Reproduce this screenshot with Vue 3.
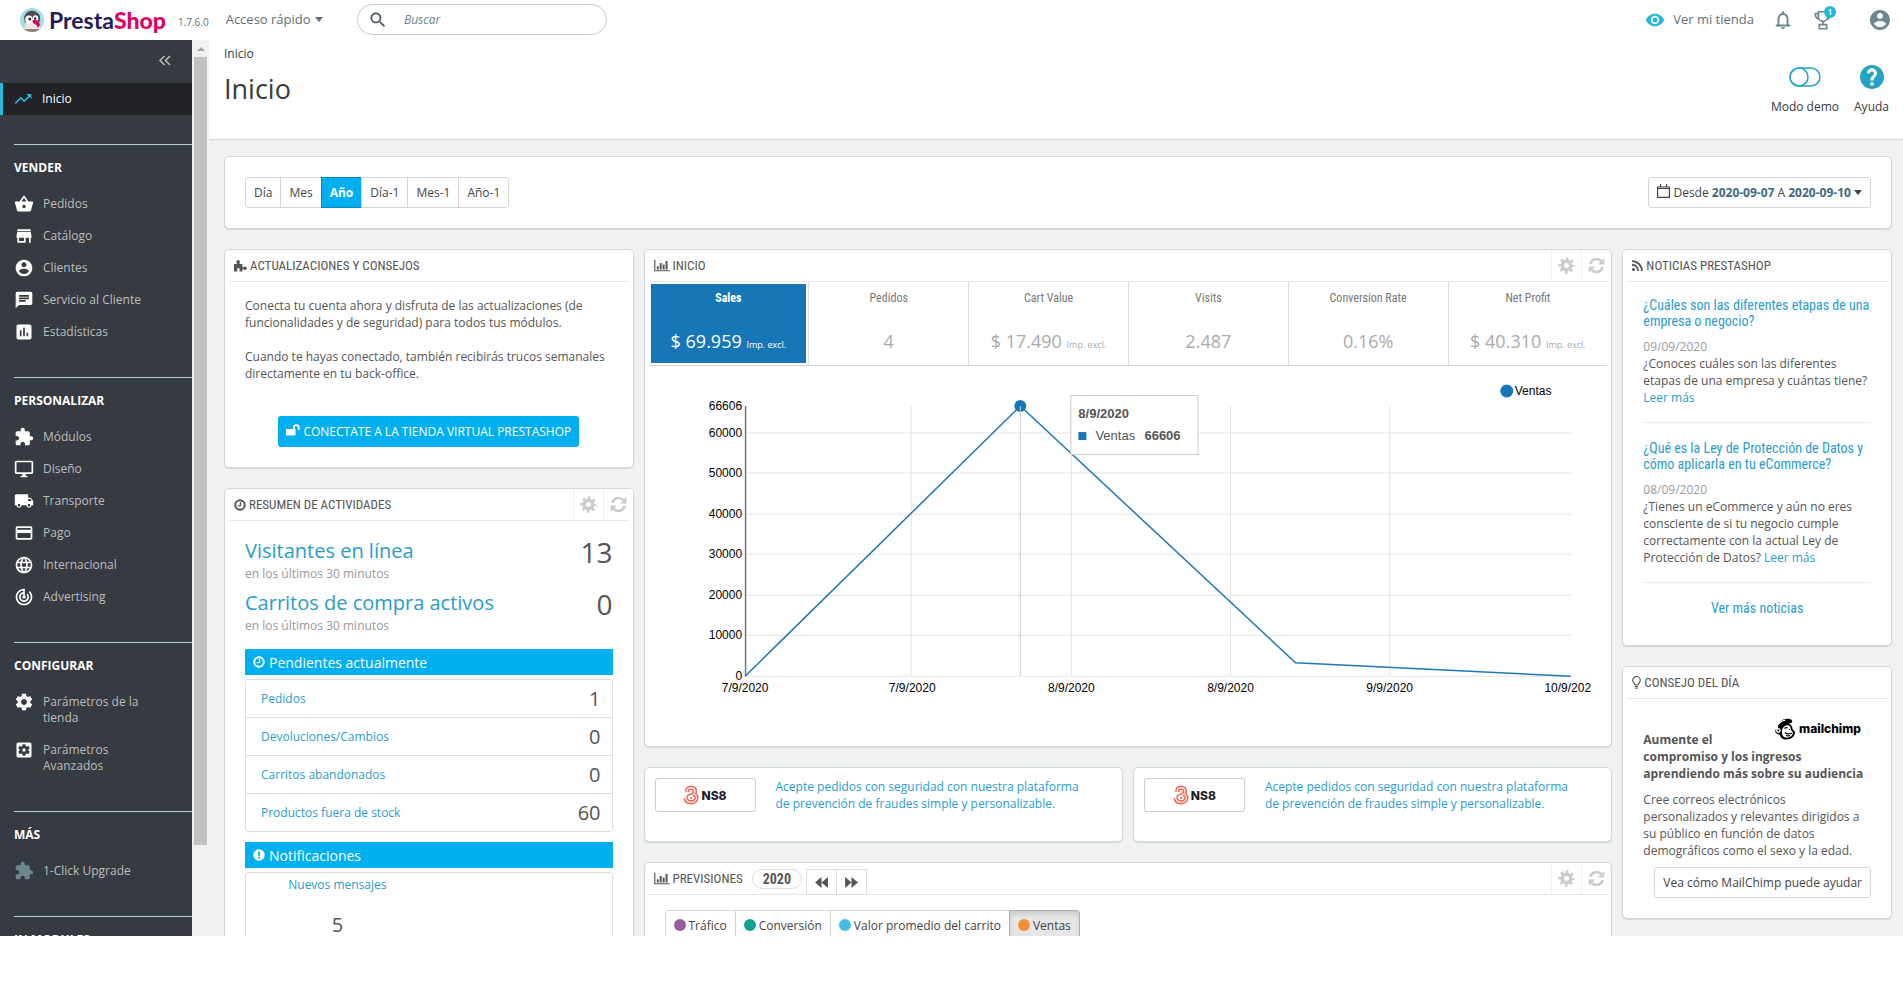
<template>
  <div class="app">
    <svg class="sprite" aria-hidden="true">
      <symbol id="cog" viewBox="0 0 24 24">
        <circle cx="12" cy="12" r="6" fill="none" stroke="currentColor" stroke-width="5" />
        <circle cx="12" cy="12" r="9" fill="none" stroke="currentColor" stroke-width="5" pathLength="16" stroke-dasharray="1 1" stroke-dashoffset="0.5" />
      </symbol>
      <symbol id="refresh" viewBox="0 0 24 24">
        <path d="M3.4 10a9 9 0 0 1 15.4-4.2M20.600 14a9 9 0 0 1-15.400 4.200" fill="none" stroke="currentColor" stroke-width="3.8" />
        <path d="M23 1.500v9h-9zM1 22.500v-9h9z" fill="currentColor" />
      </symbol>
      <symbol id="bars" viewBox="0 0 24 20">
        <path d="M0 1h1.800v16.200H24V19H0zM4 11h3v5H4zM8.500 6h3v10h-3zM13 8.500h3V16h-3zM17.500 3h3v13h-3z" fill="currentColor" />
      </symbol>
      <symbol id="clock" viewBox="0 0 24 24">
        <circle cx="12" cy="12" r="9.5" fill="none" stroke="currentColor" stroke-width="4" />
        <path d="M13 6v7.200H7.500" fill="none" stroke="currentColor" stroke-width="2.600" />
      </symbol>
      <symbol id="ns8" viewBox="0 0 18 22">
        <path d="M3.200 7.500C2.500 3.500 5.500 1.300 9 1.300c3.800 0 6.500 2.500 6 6.200-.2 1.300-1 2-1 2 2 1.200 2.800 3 2.600 5-.4 3.700-3.600 6.200-7.600 6.200-4.200 0-7.200-2.600-7.600-6.200" fill="none" stroke="#ee6b5b" stroke-width="1.800" />
        <path d="M6 7.500C6 5.500 7.200 4.500 9 4.500s3 1.200 3 2.900c0 2.800-5.500 2.600-7.300 5-1.200 2.600 1 5.200 4.300 5.200 3 0 4.900-1.800 4.700-4-.2-1.600-1.700-2.400-3-2" fill="none" stroke="#ee6b5b" stroke-width="1.800" />
        <circle cx="9.300" cy="14.200" r="1.300" fill="#ee6b5b" />
      </symbol>
    </svg>

    <header class="topbar">
      <a href="#" class="logo">
        <svg class="logo-head" viewBox="0 0 24 24">
          <clipPath id="face"><ellipse cx="12" cy="12" rx="12" ry="12" /></clipPath>
          <g clip-path="url(#face)">
            <rect width="24" height="24" fill="#a4dbe8" />
            <path d="M5 24c-1-5 0-8 2-10h8l5 3v7z" fill="#efe9dc" />
            <path d="M4 10C5 4 10 2 14 3s7 4 6 9l-2 5-3-6-6 1-4 3z" fill="#4d4b4d" />
            <ellipse cx="9" cy="11.500" rx="3.800" ry="4" fill="#fff" />
            <ellipse cx="15.500" cy="10.500" rx="2.800" ry="3.200" fill="#fff" />
            <circle cx="9.800" cy="11" r="1.500" fill="#2b2b33" />
            <circle cx="15.200" cy="10.500" r="1.200" fill="#2b2b33" />
            <path d="M12.500 12c4-1 7 1 7.500 5l-2 3c-1-3-3-4-5-5z" fill="#df0067" />
            <path d="M3 21h18v3H3z" fill="#8d8573" />
          </g>
        </svg>
        <span class="logo-text">Presta<b>Shop</b></span>
      </a>
      <span class="version">1.7.6.0</span>
      <button class="quick" type="button">Acceso rápido <i class="caret"></i></button>
      <label class="search">
        <svg viewBox="0 0 24 24"><path :d="icons.search" /></svg>
        <input type="text" placeholder="Buscar" aria-label="Buscar" />
      </label>
      <div class="topbar-right">
        <a href="#" class="shop-link">
          <svg viewBox="0 0 24 24"><path :d="icons.eye" /></svg>
          Ver mi tienda
        </a>
        <button class="icon-btn" type="button" aria-label="Notificaciones">
          <svg viewBox="0 0 24 24"><path :d="icons.bell" /></svg>
        </button>
        <button class="icon-btn trophy" type="button" aria-label="Logros">
          <svg viewBox="0 0 24 24">
            <path d="M7 3h10v5.500a5 5 0 0 1-10 0zM7 5H3.500c0 3 1 5.500 4 6M17 5h3.500c0 3-1 5.500-4 6M12 13.500V17M8 17h8v4.500H8z" fill="none" stroke="currentColor" stroke-width="1.800" />
          </svg>
          <span class="badge">1</span>
        </button>
        <button class="icon-btn avatar" type="button" aria-label="Cuenta">
          <svg viewBox="0 0 24 24"><path :d="icons.user" /></svg>
        </button>
      </div>
    </header>

    <div class="layout">
      <nav class="sidebar">
        <button class="collapse" type="button" aria-label="Contraer menú">
          <svg viewBox="0 0 14 12"><path d="M6.500 1l-5 5 5 5M12.500 1l-5 5 5 5" fill="none" stroke="currentColor" stroke-width="1.600" /></svg>
        </button>
        <a href="#" class="nav-item active">
          <svg viewBox="0 0 24 24"><path :d="icons.trending" /></svg>
          <span>Inicio</span>
        </a>
        <section v-for="group in menu" :key="group.title" class="nav-group">
          <h2>{{ group.title }}</h2>
          <a v-for="item in group.items" :key="item.label" href="#" class="nav-item" :class="{ muted: item.muted }">
            <svg viewBox="0 0 24 24"><path :d="icons[item.icon]" /></svg>
            <span>{{ item.label }}</span>
          </a>
        </section>
      </nav>
      <div class="scrollbar">
        <div class="scroll-arrow"></div>
        <div class="scroll-thumb"></div>
      </div>

      <main class="main">
        <div class="page-head">
          <div>
            <a href="#" class="breadcrumb">Inicio</a>
            <h1>Inicio</h1>
          </div>
          <div class="page-actions">
            <button type="button">
              <svg class="toggle" viewBox="0 0 32 20">
                <rect x="1" y="1" width="30" height="18" rx="9" fill="none" stroke="currentColor" stroke-width="1.500" />
                <circle cx="10" cy="10" r="9" fill="none" stroke="currentColor" stroke-width="1.500" />
              </svg>
              Modo demo
            </button>
            <button type="button">
              <svg class="help" viewBox="2 2 20 20"><path :d="icons.help" /></svg>
              Ayuda
            </button>
          </div>
        </div>

        <div class="content">
          <div class="panel toolbar">
            <div class="btn-group">
              <button v-for="p in periods" :key="p" type="button" :class="{ active: p === period }" @click="period = p">{{ p }}</button>
            </div>
            <button type="button" class="btn date-btn">
              <svg viewBox="0 0 13 14"><path d="M.6 3h11.800v10.400H.6zM.6 4.500h11.800M3.500 0v3.500M9.500 0v3.500" fill="none" stroke="currentColor" stroke-width="1.200" /></svg>
              Desde <b>2020-09-07</b> A <b>2020-09-10</b> <i class="caret"></i>
            </button>
          </div>

          <div class="columns">
            <div class="col col-left">
              <section class="panel">
                <h3 class="panel-heading">
                  <svg viewBox="0 0 14 13"><path d="M0 5h3V3.500a1.800 1.800 0 1 1 3 0V5h3v3.500h1.500a1.800 1.800 0 1 1 0 2H9V13H6v-2.500a1 1 0 0 0-2.500 0V13H0z" fill="currentColor" /></svg>
                  Actualizaciones y consejos
                </h3>
                <div class="panel-body updates">
                  <p>Conecta tu cuenta ahora y disfruta de las actualizaciones (de funcionalidades y de seguridad) para todos tus módulos.</p>
                  <p>Cuando te hayas conectado, también recibirás trucos semanales directamente en tu back-office.</p>
                  <button type="button" class="connect">
                    <svg viewBox="0 0 14 12"><path d="M0 5h7V3.500a3.300 3.300 0 0 1 6.600 0V6h-1.900V3.500a1.400 1.400 0 0 0-2.800 0V5h.6v6.500H0z" fill="currentColor" /></svg>
                    CONECTATE A LA TIENDA VIRTUAL PRESTASHOP
                  </button>
                </div>
              </section>

              <section class="panel">
                <h3 class="panel-heading">
                  <svg class="round"><use href="#clock" /></svg>
                  Resumen de actividades
                  <span class="tools">
                    <button type="button" aria-label="Configurar"><svg><use href="#cog" /></svg></button>
                    <button type="button" aria-label="Actualizar"><svg><use href="#refresh" /></svg></button>
                  </span>
                </h3>
                <div class="panel-body activity">
                  <div v-for="live in liveStats" :key="live.label" class="live">
                    <div>
                      <a href="#">{{ live.label }}</a>
                      <small>en los últimos 30 minutos</small>
                    </div>
                    <strong>{{ live.value }}</strong>
                  </div>
                  <h4 class="bar"><svg><use href="#clock" /></svg>Pendientes actualmente</h4>
                  <ul class="pending">
                    <li v-for="row in pending" :key="row.label">
                      <a href="#">{{ row.label }}</a>
                      <span>{{ row.value }}</span>
                    </li>
                  </ul>
                  <h4 class="bar">
                    <svg viewBox="0 0 24 24"><path fill-rule="evenodd" d="M12 .5a11.500 11.500 0 1 0 0 23 11.500 11.500 0 0 0 0-23zM10 5h4l-.5 9h-3zm.2 10.500h3.600V19h-3.600z" fill="currentColor" /></svg>Notificaciones
                  </h4>
                  <div class="notices">
                    <div>
                      <a href="#">Nuevos mensajes</a>
                      <span>5</span>
                    </div>
                  </div>
                </div>
              </section>
            </div>

            <div class="col col-center">
              <section class="panel">
                <h3 class="panel-heading">
                  <svg class="wide"><use href="#bars" /></svg>
                  Inicio
                  <span class="tools">
                    <button type="button" aria-label="Configurar"><svg><use href="#cog" /></svg></button>
                    <button type="button" aria-label="Actualizar"><svg><use href="#refresh" /></svg></button>
                  </span>
                </h3>
                <div class="kpis">
                  <button v-for="kpi in kpis" :key="kpi.label" type="button" class="kpi" :class="{ active: kpi.label === selected }" @click="selected = kpi.label">
                    <span class="kpi-inner">
                      <span class="kpi-label">{{ kpi.label }}</span>
                      <span class="kpi-value">{{ kpi.value }} <small v-if="kpi.tax">Imp. excl.</small></span>
                    </span>
                  </button>
                </div>
                <svg class="chart" viewBox="0 0 958 380">
                  <g class="grid">
                    <path v-for="t in yTicks" :key="t.label" :d="`M96 ${t.y}H921`" />
                    <path v-for="x in [262, 422, 581, 740]" :key="x" :d="`M${x} 40V310`" />
                  </g>
                  <path class="axis" d="M96.500 40V310" />
                  <text v-for="t in yTicks" :key="t.label" x="93" :y="t.y + 4" text-anchor="end">{{ t.label }}</text>
                  <text x="93" y="44" text-anchor="end">66606</text>
                  <text v-for="t in xTicks" :key="t.x" :x="t.x" y="326" text-anchor="middle">{{ t.label }}</text>
                  <path class="line" d="M96 310L371 40L646 296.500L921 310" />
                  <circle cx="371" cy="40" r="6" class="dot" />
                  <path class="guide" d="M371 40V310" />
                  <circle cx="857" cy="25" r="6.500" class="dot" />
                  <text x="865" y="29">Ventas</text>
                  <rect x="421.500" y="29.500" width="127" height="59" class="tip" />
                  <text x="429" y="52" class="tip-title">8/9/2020</text>
                  <rect x="429" y="66" width="8" height="8" class="dot" />
                  <text x="446" y="74" class="tip-text">Ventas</text>
                  <text x="495" y="74" class="tip-title">66606</text>
                </svg>
              </section>

              <div class="promos">
                <section v-for="n in 2" :key="n" class="panel promo">
                  <span class="ns8"><svg><use href="#ns8" /></svg>NS8</span>
                  <a href="#">Acepte pedidos con seguridad con nuestra plataforma de prevención de fraudes simple y personalizable.</a>
                </section>
              </div>

              <section class="panel">
                <h3 class="panel-heading">
                  <svg class="wide"><use href="#bars" /></svg>
                  Previsiones
                  <span class="year">2020</span>
                  <span class="pager">
                    <button type="button" aria-label="Anterior"><svg viewBox="0 0 14 12"><path d="M7 0v12L0 6zM14 0v12L7 6z" fill="currentColor" /></svg></button>
                    <button type="button" aria-label="Siguiente"><svg viewBox="0 0 14 12"><path d="M0 0v12l7-6zM7 0v12l7-6z" fill="currentColor" /></svg></button>
                  </span>
                  <span class="tools">
                    <button type="button" aria-label="Configurar"><svg><use href="#cog" /></svg></button>
                    <button type="button" aria-label="Actualizar"><svg><use href="#refresh" /></svg></button>
                  </span>
                </h3>
                <div class="panel-body">
                  <div class="btn-group series">
                    <button v-for="s in series" :key="s.label" type="button" :class="{ pressed: s.label === 'Ventas' }">
                      <i :style="{ background: s.color }"></i>{{ s.label }}
                    </button>
                  </div>
                </div>
              </section>
            </div>

            <div class="col col-right">
              <section class="panel">
                <h3 class="panel-heading">
                  <svg class="rss" viewBox="0 0 12 12"><circle cx="1.700" cy="10.300" r="1.700" fill="currentColor" /><path d="M0 5.200a6.800 6.800 0 0 1 6.800 6.800M0 1.200A10.800 10.800 0 0 1 10.800 12" fill="none" stroke="currentColor" stroke-width="2" /></svg>
                  Noticias PrestaShop
                </h3>
                <div class="panel-body news">
                  <article v-for="post in news" :key="post.date">
                    <h4><a href="#">{{ post.title }}</a></h4>
                    <time>{{ post.date }}</time>
                    <p>{{ post.text }} <a href="#">Leer más</a></p>
                  </article>
                  <a href="#" class="more">Ver más noticias</a>
                </div>
              </section>

              <section class="panel">
                <h3 class="panel-heading">
                  <svg class="bulb" viewBox="0 0 9 13"><path d="M3 9c0-1.500-2.300-2.300-2.300-4.700a3.800 3.800 0 0 1 7.600 0C8.300 6.700 6 7.500 6 9zM3 10.500h3M3.200 12.200h2.600" fill="none" stroke="currentColor" stroke-width="1.200" /></svg>
                  Consejo del día
                </h3>
                <div class="panel-body tip-day">
                  <span class="mailchimp">
                    <svg viewBox="0 0 22 22">
                      <path d="M4 10C3 5 8 1 13 .8c4-.2 6 1.700 5 3.700l-3 1c2 1 3.500 3 3.500 5.500l2.500 3c0 4-3.500 7.500-8.500 7.500-4 0-6-2-7-5-3 0-5-2-4-4.500z" fill="#000" />
                      <path d="M3 8.500C4 5 8 2.500 11.500 2.200M2.500 12.500c0-2 3-2.500 3.500-.5s-2.500 3.500-3.500.5" fill="none" stroke="#fff" stroke-width="1.300" />
                      <path d="M8 12c1-4 5-6 8-4l1 4 2 2.500c0 3-3 5-6.500 5S7.500 17 8 12z" fill="#fff" />
                      <path d="M10.500 10.500c1-1 2-1 3-.5M15 11.500h1M11 14.500c2 2 5 1.500 7 .5M12 17.500c2 .6 3 .4 4 0" fill="none" stroke="#000" stroke-width="1.200" />
                    </svg>mailchimp
                  </span>
                  <h4>Aumente el compromiso y los ingresos aprendiendo más sobre su audiencia</h4>
                  <p>Cree correos electrónicos personalizados y relevantes dirigidos a su público en función de datos demográficos como el sexo y la edad.</p>
                  <button type="button" class="btn">Vea cómo MailChimp puede ayudar</button>
                </div>
              </section>
            </div>
          </div>
        </div>
      </main>
    </div>
  </div>
</template>

<script setup>
import { ref } from 'vue';

const icons = {
  search: 'M15.5 14h-.79l-.28-.27C15.41 12.59 16 11.11 16 9.5 16 5.91 13.09 3 9.5 3S3 5.91 3 9.5 5.91 16 9.5 16c1.61 0 3.09-.59 4.23-1.57l.27.28v.79l5 4.99L20.49 19l-4.99-5zm-6 0C7.01 14 5 11.99 5 9.5S7.01 5 9.5 5 14 7.01 14 9.5 11.99 14 9.5 14z',
  eye: 'M12 4.5C7 4.5 2.73 7.61 1 12c1.73 4.39 6 7.5 11 7.5s9.27-3.11 11-7.5c-1.73-4.39-6-7.5-11-7.5zM12 17c-2.76 0-5-2.24-5-5s2.24-5 5-5 5 2.24 5 5-2.24 5-5 5zm0-8c-1.66 0-3 1.34-3 3s1.34 3 3 3 3-1.34 3-3-1.34-3-3-3z',
  bell: 'M12 22c1.1 0 2-.9 2-2h-4c0 1.1.9 2 2 2zm6-6v-5c0-3.07-1.63-5.64-4.5-6.32V4c0-.83-.67-1.5-1.5-1.5s-1.5.67-1.5 1.5v.68C7.64 5.36 6 7.92 6 11v5l-2 2v1h16v-1l-2-2zm-2 1H8v-6c0-2.48 1.51-4.5 4-4.5s4 2.02 4 4.5v6z',
  user: 'M12 2C6.48 2 2 6.48 2 12s4.48 10 10 10 10-4.48 10-10S17.52 2 12 2zm0 3c1.66 0 3 1.34 3 3s-1.34 3-3 3-3-1.34-3-3 1.34-3 3-3zm0 14.2c-2.5 0-4.71-1.28-6-3.22.03-1.99 4-3.08 6-3.08 1.99 0 5.97 1.09 6 3.08-1.29 1.94-3.5 3.22-6 3.22z',
  help: 'M12 2C6.48 2 2 6.48 2 12s4.48 10 10 10 10-4.48 10-10S17.52 2 12 2zm1.300 17h-2.600v-2.600h2.600V19zm1.970-7.750l-.9.92C13.65 12.9 13.300 13.5 13.300 15h-2.600v-.5c0-1.100.35-2.100 1.070-2.830l1.240-1.260c.37-.36.59-.86.59-1.410 0-.9-.7-1.600-1.600-1.600s-1.600.7-1.600 1.600H7.800c0-2.210 1.890-4.200 4.200-4.200s4.200 1.990 4.200 4.200c0 .88-.36 1.680-.93 2.250z',
  trending: 'M16 6l2.29 2.29-4.88 4.88-4-4L2 16.59 3.41 18l6-6 4 4 6.3-6.29L22 12V6z',
  basket: 'M17.21 9l-4.38-6.56c-.19-.28-.51-.42-.83-.42-.32 0-.64.14-.83.43L6.79 9H2c-.55 0-1 .45-1 1 0 .09.01.18.04.27l2.54 9.27c.23.84 1 1.46 1.92 1.46h13c.92 0 1.69-.62 1.93-1.46l2.54-9.27L23 10c0-.55-.45-1-1-1h-4.79zM9 9l3-4.4L15 9H9zm3 8c-1.1 0-2-.9-2-2s.9-2 2-2 2 .9 2 2-.9 2-2 2z',
  store: 'M20 4H4v2h16V4zm1 10v-2l-1-5H4l-1 5v2h1v6h10v-6h4v6h2v-6h1zm-9 4H6v-4h6v4z',
  chat: 'M20 2H4c-1.1 0-1.99.9-1.99 2L2 22l4-4h14c1.1 0 2-.9 2-2V4c0-1.1-.9-2-2-2zM6 9h12v2H6V9zm8 5H6v-2h8v2zm4-6H6V6h12v2z',
  stats: 'M19 3H5c-1.1 0-2 .9-2 2v14c0 1.1.9 2 2 2h14c1.1 0 2-.9 2-2V5c0-1.1-.9-2-2-2zM9 17H7v-7h2v7zm4 0h-2V7h2v10zm4 0h-2v-4h2v4z',
  puzzle: 'M20.5 11H19V7c0-1.1-.9-2-2-2h-4V3.5C13 2.12 11.88 1 10.5 1S8 2.12 8 3.5V5H4c-1.1 0-1.99.9-1.99 2v3.8H3.5c1.49 0 2.7 1.21 2.7 2.7s-1.21 2.7-2.7 2.7H2V20c0 1.1.9 2 2 2h3.8v-1.5c0-1.49 1.21-2.7 2.7-2.7 1.49 0 2.7 1.21 2.7 2.7V22H17c1.1 0 2-.9 2-2v-4h1.5c1.38 0 2.5-1.12 2.5-2.5S21.88 11 20.5 11z',
  desktop: 'M21 2H3c-1.1 0-2 .9-2 2v12c0 1.1.9 2 2 2h7v2H8v2h8v-2h-2v-2h7c1.1 0 2-.9 2-2V4c0-1.1-.9-2-2-2zm0 14H3V4h18v12z',
  truck: 'M20 8h-3V4H3c-1.1 0-2 .9-2 2v11h2c0 1.66 1.34 3 3 3s3-1.34 3-3h6c0 1.66 1.34 3 3 3s3-1.34 3-3h2v-5l-3-4zM6 18.5c-.83 0-1.5-.67-1.5-1.5s.67-1.5 1.5-1.5 1.5.67 1.5 1.5-.67 1.5-1.5 1.5zm13.5-9l1.96 2.5H17V9.5h2.5zm-1.5 9c-.83 0-1.5-.67-1.5-1.5s.67-1.5 1.5-1.5 1.5.67 1.5 1.5-.67 1.5-1.5 1.5z',
  card: 'M20 4H4c-1.11 0-1.99.89-1.99 2L2 18c0 1.11.89 2 2 2h16c1.11 0 2-.89 2-2V6c0-1.11-.89-2-2-2zm0 14H4v-6h16v6zm0-10H4V6h16v2z',
  globe: 'M11.99 2C6.47 2 2 6.48 2 12s4.47 10 9.99 10C17.52 22 22 17.52 22 12S17.52 2 11.99 2zm6.93 6h-2.95c-.32-1.25-.78-2.45-1.38-3.56 1.84.63 3.37 1.91 4.33 3.56zM12 4.04c.83 1.2 1.48 2.53 1.91 3.96h-3.82c.43-1.43 1.08-2.76 1.91-3.96zM4.26 14C4.1 13.36 4 12.69 4 12s.1-1.36.26-2h3.38c-.08.66-.14 1.32-.14 2 0 .68.06 1.34.14 2H4.26zm.82 2h2.95c.32 1.25.78 2.45 1.38 3.56-1.84-.63-3.37-1.9-4.33-3.56zm2.95-8H5.08c.96-1.66 2.49-2.93 4.33-3.56C8.81 5.55 8.35 6.75 8.03 8zM12 19.96c-.83-1.2-1.48-2.53-1.91-3.96h3.82c-.43 1.43-1.08 2.76-1.91 3.96zM14.34 14H9.66c-.09-.66-.16-1.32-.16-2 0-.68.07-1.35.16-2h4.68c.09.65.16 1.32.16 2 0 .68-.07 1.34-.16 2zm.25 5.56c.6-1.11 1.06-2.31 1.38-3.56h2.95c-.96 1.65-2.49 2.93-4.33 3.56zM16.36 14c.08-.66.14-1.32.14-2 0-.68-.06-1.34-.14-2h3.38c.16.64.26 1.31.26 2s-.1 1.36-.26 2h-3.38z',
  target: 'M19.07 4.93l-1.41 1.41C19.1 7.79 20 9.79 20 12c0 4.42-3.58 8-8 8s-8-3.58-8-8c0-4.08 3.05-7.44 7-7.93v2.02C8.16 6.57 6 9.03 6 12c0 3.31 2.69 6 6 6s6-2.69 6-6c0-1.66-.67-3.16-1.76-4.24l-1.41 1.41C15.55 9.9 16 10.9 16 12c0 2.21-1.79 4-4 4s-4-1.79-4-4c0-1.86 1.28-3.41 3-3.86v2.14c-.6.35-1 .98-1 1.72 0 1.1.9 2 2 2s2-.9 2-2c0-.74-.4-1.38-1-1.72V2h-1C6.48 2 2 6.48 2 12s4.48 10 10 10 10-4.48 10-10c0-2.76-1.12-5.26-2.93-7.07z',
  gear: 'M19.43 12.98c.04-.32.07-.64.07-.98s-.03-.66-.07-.98l2.11-1.65c.19-.15.24-.42.12-.64l-2-3.46c-.12-.22-.39-.3-.61-.22l-2.49 1c-.52-.4-1.08-.73-1.69-.98l-.38-2.65C14.46 2.18 14.25 2 14 2h-4c-.25 0-.46.18-.49.42l-.38 2.65c-.61.25-1.17.59-1.69.98l-2.49-1c-.23-.09-.49 0-.61.22l-2 3.46c-.13.22-.07.49.12.64l2.11 1.65c-.04.32-.07.65-.07.98s.03.66.07.98l-2.11 1.65c-.19.15-.24.42-.12.64l2 3.46c.12.22.39.3.61.22l2.49-1c.52.4 1.08.73 1.69.98l.38 2.65c.03.24.24.42.49.42h4c.25 0 .46-.18.49-.42l.38-2.65c.61-.25 1.17-.59 1.69-.98l2.49 1c.23.09.49 0 .61-.22l2-3.46c.12-.22.07-.49-.12-.64l-2.11-1.65zM12 15.5c-1.93 0-3.5-1.57-3.5-3.5s1.57-3.5 3.5-3.5 3.5 1.57 3.5 3.5-1.57 3.5-3.5 3.5z',
  gearBox: 'M12 10c-1.1 0-2 .9-2 2s.9 2 2 2 2-.9 2-2-.9-2-2-2zm7-7H5c-1.11 0-2 .9-2 2v14c0 1.1.89 2 2 2h14c1.11 0 2-.9 2-2V5c0-1.1-.89-2-2-2zm-1.75 9c0 .23-.02.46-.05.68l1.48 1.16c.13.11.17.3.08.45l-1.4 2.42c-.09.15-.27.21-.43.15l-1.74-.7c-.36.28-.76.51-1.18.69l-.26 1.85c-.03.17-.18.3-.35.3h-2.8c-.17 0-.32-.13-.35-.29l-.26-1.85c-.43-.18-.82-.41-1.18-.69l-1.74.7c-.16.06-.34 0-.43-.15l-1.4-2.42c-.09-.15-.05-.34.08-.45l1.48-1.16c-.03-.23-.05-.46-.05-.69 0-.23.02-.46.05-.68l-1.48-1.16c-.13-.11-.17-.3-.08-.45l1.4-2.42c.09-.15.27-.21.43-.15l1.74.7c.36-.28.76-.51 1.18-.69l.26-1.85c.03-.17.18-.3.35-.3h2.8c.17 0 .32.13.35.29l.26 1.85c.43.18.82.41 1.18.69l1.74-.7c.16-.06.34 0 .43.15l1.4 2.42c.09.15.05.34-.08.45l-1.48 1.16c.03.23.05.46.05.69z'
};

const menu = [
  {
    title: 'VENDER',
    items: [
      { label: 'Pedidos', icon: 'basket' },
      { label: 'Catálogo', icon: 'store' },
      { label: 'Clientes', icon: 'user' },
      { label: 'Servicio al Cliente', icon: 'chat' },
      { label: 'Estadísticas', icon: 'stats' }
    ]
  },
  {
    title: 'PERSONALIZAR',
    items: [
      { label: 'Módulos', icon: 'puzzle' },
      { label: 'Diseño', icon: 'desktop' },
      { label: 'Transporte', icon: 'truck' },
      { label: 'Pago', icon: 'card' },
      { label: 'Internacional', icon: 'globe' },
      { label: 'Advertising', icon: 'target' }
    ]
  },
  {
    title: 'CONFIGURAR',
    items: [
      { label: 'Parámetros de la tienda', icon: 'gear' },
      { label: 'Parámetros Avanzados', icon: 'gearBox' }
    ]
  },
  {
    title: 'MÁS',
    items: [{ label: '1-Click Upgrade', icon: 'puzzle', muted: true }]
  },
  { title: 'IN MODULES', items: [] }
];

const periods = ['Día', 'Mes', 'Año', 'Día-1', 'Mes-1', 'Año-1'];
const period = ref('Año');

const liveStats = [
  { label: 'Visitantes en línea', value: 13 },
  { label: 'Carritos de compra activos', value: 0 }
];

const pending = [
  { label: 'Pedidos', value: 1 },
  { label: 'Devoluciones/Cambios', value: 0 },
  { label: 'Carritos abandonados', value: 0 },
  { label: 'Productos fuera de stock', value: 60 }
];

const kpis = [
  { label: 'Sales', value: '$ 69.959', tax: true },
  { label: 'Pedidos', value: '4' },
  { label: 'Cart Value', value: '$ 17.490', tax: true },
  { label: 'Visits', value: '2.487' },
  { label: 'Conversion Rate', value: '0.16%' },
  { label: 'Net Profit', value: '$ 40.310', tax: true }
];
const selected = ref('Sales');

const yTicks = [0, 10000, 20000, 30000, 40000, 50000, 60000].map((value) => ({
  label: value,
  y: Math.round(310 - (value / 66606) * 270)
}));

const xTicks = [
  { x: 96, label: '7/9/2020' },
  { x: 263, label: '7/9/2020' },
  { x: 422, label: '8/9/2020' },
  { x: 581, label: '8/9/2020' },
  { x: 740, label: '9/9/2020' },
  { x: 918, label: '10/9/202' }
];

const series = [
  { label: 'Tráfico', color: '#9a5a9e' },
  { label: 'Conversión', color: '#12a096' },
  { label: 'Valor promedio del carrito', color: '#43bce6' },
  { label: 'Ventas', color: '#f28f37' }
];

const news = [
  {
    title: '¿Cuáles son las diferentes etapas de una empresa o negocio?',
    date: '09/09/2020',
    text: '¿Conoces cuáles son las diferentes etapas de una empresa y cuántas tiene?'
  },
  {
    title: '¿Qué es la Ley de Protección de Datos y cómo aplicarla en tu eCommerce?',
    date: '08/09/2020',
    text: '¿Tienes un eCommerce y aún no eres consciente de si tu negocio cumple correctamente con la actual Ley de Protección de Datos?'
  }
];
</script>

<style>
body {
  background: #fff;
}
</style>

<style scoped>
.app {
  --condensed: "Ubuntu Condensed", "Roboto Condensed", Roboto, sans-serif;
  display: flex;
  flex-direction: column;
  height: calc(100vh - 68px);
  overflow: hidden;
  font-family: "Open Sans", sans-serif;
  font-size: 12px;
  line-height: 17px;
  color: #555;
}
.app * {
  box-sizing: border-box;
}
.sprite {
  display: none;
}
svg {
  fill: currentColor;
  flex: none;
}
button,
input {
  font: inherit;
  color: inherit;
  background: none;
  border: 0;
  padding: 0;
  margin: 0;
}
button {
  cursor: pointer;
}
a {
  color: #2a9ccc;
  text-decoration: none;
}
h1,
h2,
h3,
h4,
p,
ul {
  margin: 0;
  padding: 0;
  list-style: none;
  font-weight: 400;
}
.caret {
  display: inline-block;
  border: 4px solid transparent;
  border-top: 5px solid currentColor;
  border-bottom: 0;
  vertical-align: 2px;
}

/* top bar */
.topbar {
  display: flex;
  align-items: center;
  flex: none;
  height: 40px;
  padding: 0 11px 1px 20px;
  background: #fff;
  color: #5f6f76;
}
.logo {
  display: flex;
  align-items: center;
  gap: 5px;
}
.logo-head {
  width: 24px;
  height: 24px;
}
.logo-text {
  font-family: Lato, sans-serif;
  font-size: 23px;
  line-height: 24px;
  font-weight: 700;
  color: #251b5b;
}
.logo-text b {
  color: #df0067;
}
.version {
  margin: 5px 17px 0 12px;
  font-size: 10px;
  line-height: 16px;
}
.quick {
  font-size: 13px;
}
.quick .caret {
  margin-left: 1px;
}
.search {
  display: flex;
  align-items: center;
  gap: 16px;
  width: 250px;
  height: 31px;
  margin: 0 0 0 34px;
  padding: 0 10px;
  border: 1px solid #bbcdd2;
  border-radius: 16px;
}
.search svg {
  width: 20px;
  height: 20px;
  color: #4a5a61;
}
.search input {
  flex: 1;
  min-width: 0;
  outline: 0;
}
.search input::placeholder {
  font-style: italic;
  color: #6c868e;
  opacity: 1;
}
.topbar-right {
  display: flex;
  align-items: center;
  margin-left: auto;
}
.shop-link {
  display: flex;
  align-items: center;
  gap: 8px;
  margin-right: 18px;
  font-size: 13px;
  color: #5f6f76;
}
.shop-link svg {
  width: 20px;
  height: 20px;
  color: #25b9d7;
}
.icon-btn {
  position: relative;
  display: flex;
  margin-right: 18px;
  color: #6c868e;
}
.icon-btn svg {
  width: 22px;
  height: 22px;
}
.trophy {
  margin-right: 34px;
}
.badge {
  position: absolute;
  top: -3px;
  right: -2px;
  width: 12px;
  height: 12px;
  border-radius: 50%;
  background: #25b9d7;
  color: #fff;
  font-size: 8px;
  line-height: 12px;
  font-weight: 600;
  text-align: center;
}
.avatar {
  margin-right: 0;
}
.avatar svg {
  width: 24px;
  height: 24px;
}

/* sidebar */
.layout {
  display: flex;
  flex: 1;
  min-height: 0;
}
.sidebar {
  flex: none;
  width: 192px;
  background: #363a41;
  overflow: hidden;
}
.collapse {
  display: block;
  margin: 15px 20px 17px auto;
  color: #bebebe;
}
.collapse svg {
  display: block;
  width: 14px;
  height: 11px;
}
.nav-item {
  display: flex;
  gap: 9px;
  padding: 8px 40px 8px 14px;
  line-height: 16px;
  color: #bebebe;
}
.nav-item svg {
  width: 20px;
  height: 20px;
  margin: -2px 0;
  color: #fff;
}
.nav-item.active {
  padding-left: 10px;
  border-left: 3px solid #25b9d7;
  margin-bottom: 29px;
  background: #202226;
  color: #fff;
}
.nav-item.active svg {
  color: #25b9d7;
}
.nav-item.muted svg {
  color: #6c868e;
}
.nav-group {
  margin: 0 0 29px 14px;
  padding-top: 13px;
  border-top: 1px solid #bbcdd2;
}
.nav-group h2 {
  margin-bottom: 10px;
  font-size: 12px;
  line-height: 20px;
  font-weight: 700;
  color: #fff;
}
.nav-group .nav-item {
  padding-left: 0;
}
.scrollbar {
  display: flex;
  flex-direction: column;
  flex: none;
  width: 17px;
  padding: 0 2px;
  background: #f1f1f1;
}
.scroll-arrow {
  height: 17px;
  padding: 7px 3px;
}
.scroll-arrow::before {
  content: "";
  display: block;
  width: 0;
  border: 4px solid transparent;
  border-top: 0;
  border-bottom-color: #a3a3a3;
}
.scroll-thumb {
  height: 88%;
  background: #c1c1c1;
}

/* page */
.main {
  flex: 1;
  min-width: 0;
  background: #eff1f2;
}
.page-head {
  display: flex;
  justify-content: space-between;
  height: 99px;
  padding: 5px 14px 0 15px;
  background: #fff;
  box-shadow: 0 1px 1px #d3d8db;
  color: #363a41;
}
.breadcrumb {
  color: #363a41;
}
.page-head h1 {
  margin-top: 9px;
  font-size: 27px;
  line-height: 36px;
}
.page-actions {
  display: flex;
  gap: 15px;
  padding-top: 20px;
}
.page-actions button {
  display: flex;
  flex-direction: column;
  align-items: center;
  gap: 9px;
}
.page-actions svg {
  height: 24px;
  color: #25a3c2;
}
.toggle {
  width: 32px;
}
.help {
  width: 24px;
}
.content {
  padding: 17px 11px 0 15px;
}
.panel {
  margin-bottom: 20px;
  border: 1px solid #d3d8db;
  border-radius: 5px;
  background: #fff;
  box-shadow: 0 1px 1px #d3d8db;
}
.toolbar {
  display: flex;
  align-items: center;
  justify-content: space-between;
  height: 73px;
  padding: 0 20px;
}
.btn-group {
  display: inline-flex;
}
.btn-group button {
  height: 31px;
  padding: 0 8px;
  border: 1px solid #d6d6d6;
  margin-left: -1px;
  white-space: nowrap;
  color: #444;
}
.btn-group button:first-child {
  margin-left: 0;
  border-radius: 3px 0 0 3px;
}
.btn-group button:last-child {
  border-radius: 0 3px 3px 0;
}
.btn-group .active {
  background: #00aff0;
  border-color: #008abd;
  color: #fff;
  font-weight: 700;
}
.btn {
  height: 31px;
  padding: 0 8px;
  border: 1px solid #d6d6d6;
  border-radius: 3px;
  color: #444;
}
.date-btn svg {
  width: 13px;
  height: 14px;
  vertical-align: -1px;
}
.date-btn b {
  color: #41687d;
}
.columns {
  display: grid;
  grid-template-columns: repeat(12, minmax(0, 1fr));
  column-gap: 10px;
}
.col-left {
  grid-column: span 3;
}
.col-center {
  grid-column: span 7;
}
.col-right {
  grid-column: span 2;
}
.panel-heading {
  display: flex;
  align-items: center;
  gap: 3px;
  height: 32px;
  margin: 0 4px;
  padding-left: 5px;
  border-bottom: 1px solid #e6e6e6;
  font-family: var(--condensed);
  font-size: 13px;
  text-transform: uppercase;
  color: #555;
}
.panel-heading > svg {
  width: 13px;
  height: 13px;
}
.panel-heading > .round {
  width: 12px;
  height: 12px;
}
.panel-heading > .wide {
  width: 16px;
  height: 13px;
}
.panel-heading > .rss {
  width: 11px;
  height: 11px;
}
.panel-heading > .bulb {
  width: 9px;
}
.tools {
  display: flex;
  align-self: stretch;
  margin: 0 -4px 0 auto;
}
.tools button {
  display: flex;
  align-items: center;
  justify-content: center;
  width: 30px;
  border-left: 1px solid #eee;
  color: #ccc;
}
.tools svg {
  width: 17px;
  height: 17px;
}
.panel-body {
  padding: 15px 20px 20px;
}

/* left column */
.updates {
  display: flex;
  flex-direction: column;
}
.updates p {
  margin-bottom: 17px;
}
.connect {
  align-self: center;
  height: 31px;
  margin-top: 17px;
  padding: 0 8px;
  border-radius: 3px;
  background: #00aff0;
  color: #fff;
}
.connect svg {
  width: 14px;
  height: 12px;
}
.activity {
  padding-top: 17px;
}
.live {
  display: flex;
  justify-content: space-between;
  margin-bottom: 5px;
}
.live a {
  display: block;
  font-size: 20px;
  line-height: 25px;
}
.live small {
  display: block;
  font-size: 12px;
  line-height: 22px;
  color: #999;
}
.live strong {
  font-size: 28px;
  line-height: 28px;
  font-weight: 400;
}
.bar {
  display: flex;
  align-items: center;
  gap: 4px;
  height: 26px;
  margin: 10px 0 4px;
  padding-left: 8px;
  background: #00aff0;
  font-size: 14px;
  color: #fff;
}
.live + .bar {
  margin-top: 12px;
}
.bar svg {
  width: 12px;
  height: 12px;
}
.pending {
  border: 1px solid #ddd;
  border-radius: 3px;
}
.pending li {
  display: flex;
  align-items: center;
  justify-content: space-between;
  height: 38px;
  padding: 0 11px 0 15px;
  border-top: 1px solid #ddd;
}
.pending li:first-child {
  height: 37px;
  border-top: 0;
}
.pending span,
.notices span {
  font-size: 20px;
  line-height: 24px;
}
.notices {
  display: grid;
  grid-template-columns: 1fr 1fr;
  border: 1px solid #ddd;
  border-radius: 3px;
}
.notices div {
  display: flex;
  flex-direction: column;
  align-items: center;
  gap: 20px;
  padding: 3px 0 12px;
}

/* center column */
.kpis {
  display: grid;
  grid-template-columns: repeat(6, 1fr);
  margin: 0 4px;
  border-bottom: 1px solid #d3d3d3;
}
.kpi {
  padding: 2px;
  border-left: 1px solid #ddd;
  color: #aaa;
}
.kpi:first-child {
  border-left: 0;
}
.kpi-inner {
  display: flex;
  flex-direction: column;
  align-items: center;
  height: 79px;
  padding-top: 6px;
}
.kpi-label {
  margin-bottom: 22px;
  font-family: var(--condensed);
  font-size: 12px;
  color: #777;
}
.kpi-value {
  font-size: 18px;
  line-height: 24px;
}
.kpi-value small {
  font-size: 9px;
}
.kpi.active .kpi-inner {
  background: #1777b6;
}
.kpi.active,
.kpi.active .kpi-label {
  color: #fff;
}
.kpi.active .kpi-label {
  font-weight: 700;
}
.chart {
  display: block;
  width: calc(100% - 8px);
  margin: 0 4px;
  font-family: "Liberation Sans", Arial, sans-serif;
  font-size: 12px;
  fill: #000;
}
.grid path {
  stroke: #e5e5e5;
}
.axis {
  stroke: #777;
  stroke-width: 1.5;
}
.line {
  fill: none;
  stroke: #1f77b4;
  stroke-width: 1.5;
}
.dot {
  fill: #1777b6;
}
.guide {
  stroke: #ccc;
}
.tip {
  fill: #fff;
  stroke: #ccc;
}
.tip-text {
  font-size: 13px;
  fill: #555;
}
.tip-title {
  font-size: 13px;
  font-weight: 700;
  fill: #555;
}
.promos {
  display: grid;
  grid-template-columns: 1fr 1fr;
  gap: 10px;
}
.promo {
  display: flex;
  align-items: flex-start;
  gap: 20px;
  height: 75px;
  padding: 10px 40px 0 10px;
}
.ns8 {
  display: flex;
  align-items: center;
  justify-content: center;
  gap: 2px;
  flex: none;
  width: 101px;
  height: 34px;
  border: 1px solid #ccc;
  border-radius: 3px;
  font-family: Inter, sans-serif;
  font-weight: 800;
  color: #1d1d2b;
}
.ns8 svg {
  width: 16px;
  height: 20px;
}
.year {
  margin-left: 6px;
  padding: 0 10px;
  border: 1px solid #ddd;
  border-radius: 10px;
  font-size: 14px;
  line-height: 18px;
  font-weight: 700;
}
.pager {
  display: flex;
  align-self: flex-end;
  margin: 0 0 -1px 1px;
}
.pager button {
  display: flex;
  align-items: center;
  justify-content: center;
  width: 31px;
  height: 26px;
  border: 1px solid #ddd;
}
.pager button + button {
  margin-left: -1px;
}
.pager svg {
  width: 13px;
  height: 11px;
}
.series i {
  display: inline-block;
  width: 12px;
  height: 12px;
  margin-right: 3px;
  border-radius: 50%;
  vertical-align: -1px;
}
.series .pressed {
  border-color: #adadad;
  background: #e6e6e6;
  box-shadow: inset 0 3px 5px rgba(0, 0, 0, 0.125);
}

/* right column */
.news article {
  padding-bottom: 16px;
  margin-bottom: 17px;
  border-bottom: 1px solid #eaedef;
}
.news h4,
.more {
  font-family: var(--condensed);
  font-size: 14px;
  line-height: 16px;
}
.news h4 {
  margin-bottom: 9px;
}
.news time {
  display: block;
  color: #999;
}
.more {
  display: block;
  padding-bottom: 9px;
  text-align: center;
}
.mailchimp {
  display: flex;
  align-items: center;
  gap: 3px;
  float: right;
  margin: 4px 10px 0 60px;
  font-family: Inter, sans-serif;
  font-size: 12px;
  line-height: 22px;
  font-weight: 800;
  color: #000;
}
.mailchimp svg {
  width: 22px;
  height: 22px;
}
.tip-day h4 {
  padding-top: 17px;
  margin-bottom: 9px;
  font-weight: 700;
}
.tip-day .btn {
  display: block;
  margin: 8px 0 0 auto;
}
</style>
